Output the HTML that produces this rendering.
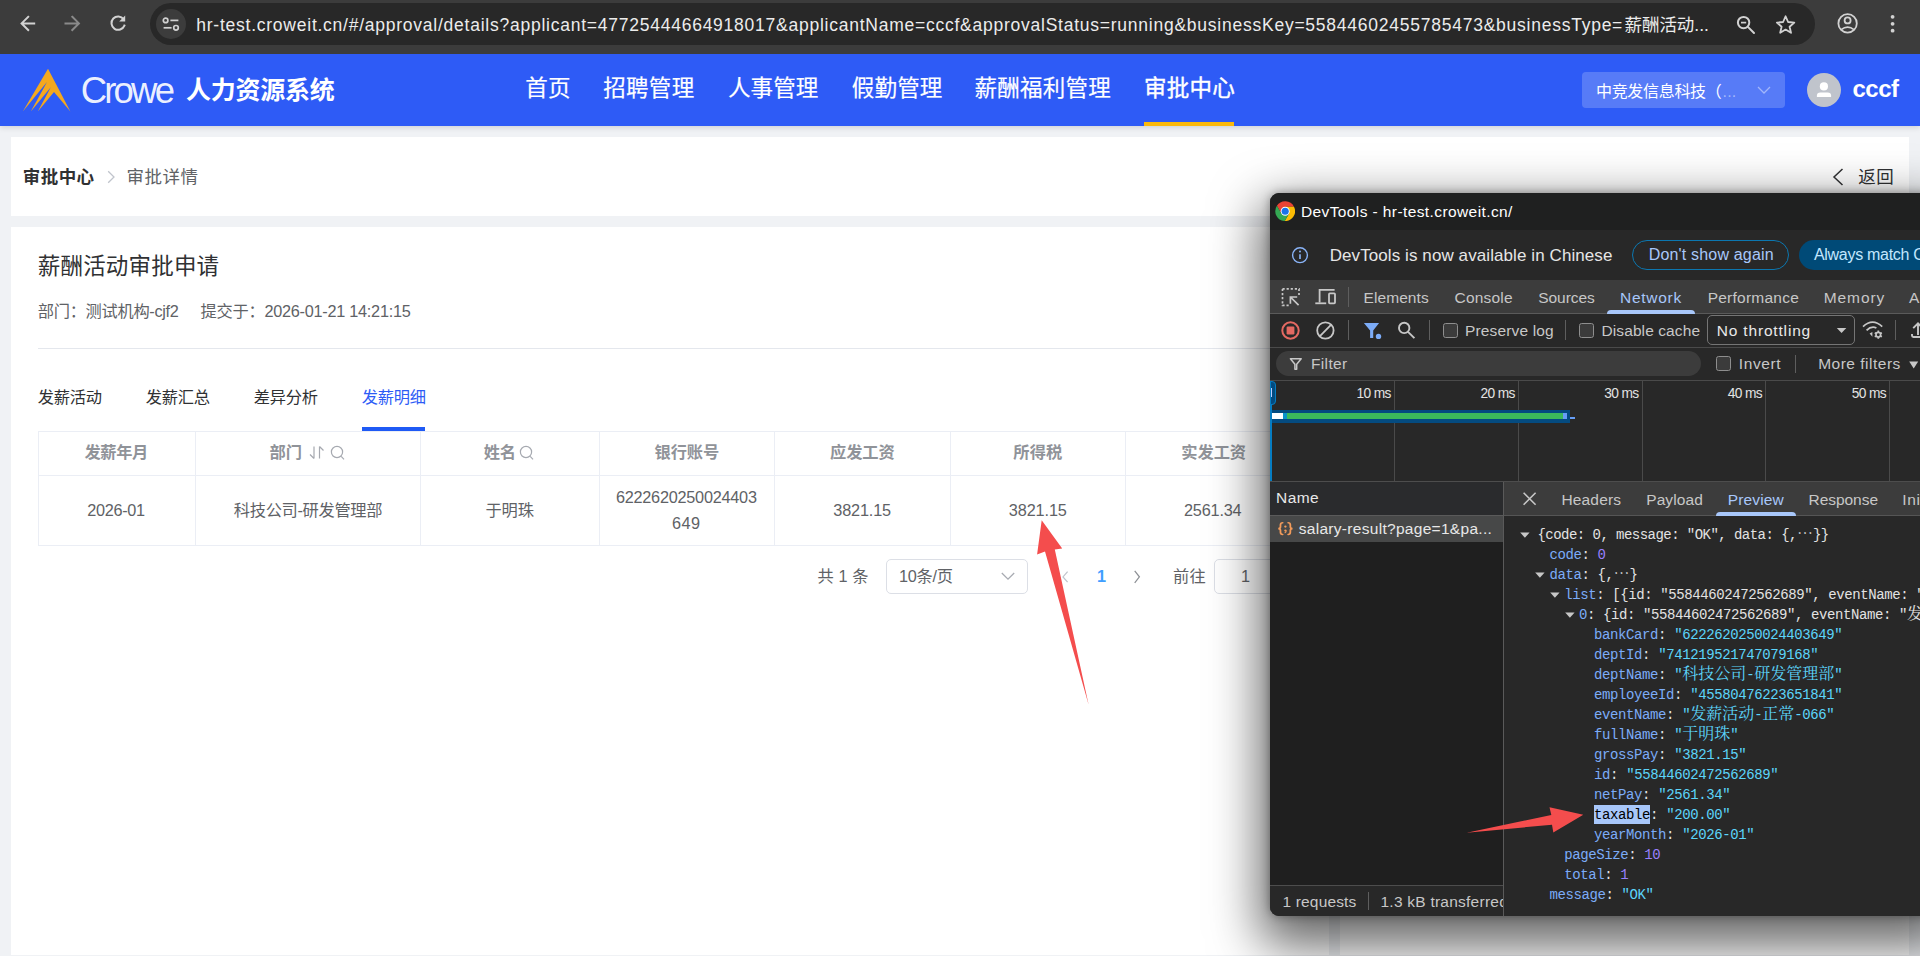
<!DOCTYPE html>
<html lang="zh-CN">
<head>
<meta charset="utf-8">
<title>审批详情</title>
<style>
*{margin:0;padding:0;box-sizing:border-box}
html,body{width:1920px;height:956px;overflow:hidden;background:#f0f2f5}
body{position:relative;font-family:"Liberation Sans","Noto Sans CJK SC",sans-serif;font-size:16px;color:#303133}
.b{position:absolute;display:block}
.t{position:absolute;white-space:pre;display:block}
</style>
</head>
<body>
<!-- ===== web page ===== -->
<div class="b" style="left:11px;top:137px;width:1898px;height:79px;background:#fff;"></div>
<div class="b" style="left:11px;top:227px;width:1318px;height:728px;background:#fff;"></div>
<div class="b" style="left:1340px;top:227px;width:569px;height:728px;background:#fff;"></div>
<span class="t" style="left:22.8px;top:163.6px;font-size:17.5px;line-height:26px;color:#303133;font-weight:700;letter-spacing:0.425px;">审批中心</span>
<svg class="b" style="left:105px;top:169px;" width="12" height="16" viewBox="0 0 12 16"><path d="M3.2 2.2 L9 8 L3.2 13.8" fill="none" stroke="#c0c4cc" stroke-width="1.3"/></svg>
<span class="t" style="left:126.4px;top:163.6px;font-size:17.5px;line-height:26px;color:#606266;letter-spacing:0.525px;">审批详情</span>
<svg class="b" style="left:1830px;top:167px;" width="16" height="20" viewBox="0 0 16 20"><path d="M12.5 2 L4 10 L12.5 18" fill="none" stroke="#303133" stroke-width="1.5"/></svg>
<span class="t" style="left:1858.3px;top:163.6px;font-size:17.5px;line-height:26px;color:#303133;letter-spacing:0.45px;">返回</span>
<span class="t" style="left:37.8px;top:249.6px;font-size:22.5px;line-height:34px;color:#303133;letter-spacing:0.186px;">薪酬活动审批申请</span>
<span class="t" style="left:37.8px;top:299.0px;font-size:16.25px;line-height:24px;color:#606266;letter-spacing:-0.313px;">部门：测试机构-cjf2</span>
<span class="t" style="left:200.5px;top:299.0px;font-size:16.25px;line-height:24px;color:#606266;letter-spacing:-0.257px;">提交于：2026-01-21 14:21:15</span>
<div class="b" style="left:38px;top:347.5px;width:1264px;height:1.25px;background:#e4e7ed;"></div>
<span class="t" style="left:37.8px;top:385.3px;font-size:16.25px;line-height:24px;color:#303133;letter-spacing:-0.3px;">发薪活动</span>
<span class="t" style="left:145.8px;top:385.3px;font-size:16.25px;line-height:24px;color:#303133;letter-spacing:-0.3px;">发薪汇总</span>
<span class="t" style="left:253.8px;top:385.3px;font-size:16.25px;line-height:24px;color:#303133;letter-spacing:-0.3px;">差异分析</span>
<span class="t" style="left:361.8px;top:385.3px;font-size:16.25px;line-height:24px;color:#2d5cf6;letter-spacing:-0.3px;">发薪明细</span>
<div class="b" style="left:362px;top:427.2px;width:63.2px;height:3.8px;background:#1f5af5;"></div>
<div class="b" style="left:38px;top:431px;width:1264px;height:114.5px;border:1.25px solid #ebeef5;"></div>
<div class="b" style="left:38px;top:474.6px;width:1264px;height:1.25px;background:#ebeef5;"></div>
<div class="b" style="left:195px;top:431px;width:1.25px;height:114.5px;background:#ebeef5;"></div>
<div class="b" style="left:420px;top:431px;width:1.25px;height:114.5px;background:#ebeef5;"></div>
<div class="b" style="left:599px;top:431px;width:1.25px;height:114.5px;background:#ebeef5;"></div>
<div class="b" style="left:774px;top:431px;width:1.25px;height:114.5px;background:#ebeef5;"></div>
<div class="b" style="left:950px;top:431px;width:1.25px;height:114.5px;background:#ebeef5;"></div>
<div class="b" style="left:1125px;top:431px;width:1.25px;height:114.5px;background:#ebeef5;"></div>
<span class="t" style="left:84.5px;top:440.3px;font-size:16.25px;line-height:24px;color:#909399;font-weight:700;letter-spacing:-0.375px;">发薪年月</span>
<span class="t" style="left:269.5px;top:440.3px;font-size:16.25px;line-height:24px;color:#909399;font-weight:700;letter-spacing:0.1px;">部门</span>
<svg class="b" style="left:308px;top:444px;" width="18" height="17" viewBox="0 0 18 17"><g fill="none" stroke="#a6a9b0" stroke-width="1.2"><path d="M6 2.5 V14.5 M6 14.5 L2 10.5"/><path d="M11.5 14.5 V2.5 M11.5 2.5 L15.5 6.5"/></g></svg>
<svg class="b" style="left:330px;top:444px;" width="16" height="17" viewBox="0 0 16 17"><g fill="none" stroke="#a6a9b0" stroke-width="1.2"><circle cx="7" cy="8" r="5.6"/><path d="M11.2 12.4 L14 15.3"/></g></svg>
<span class="t" style="left:483.8px;top:440.3px;font-size:16.25px;line-height:24px;color:#909399;font-weight:700;letter-spacing:-0.4px;">姓名</span>
<svg class="b" style="left:519px;top:444px;" width="16" height="17" viewBox="0 0 16 17"><g fill="none" stroke="#a6a9b0" stroke-width="1.2"><circle cx="7" cy="8" r="5.6"/><path d="M11.2 12.4 L14 15.3"/></g></svg>
<span class="t" style="left:654.5px;top:440.3px;font-size:16.25px;line-height:24px;color:#909399;font-weight:700;letter-spacing:-0.075px;">银行账号</span>
<span class="t" style="left:830.0px;top:440.3px;font-size:16.25px;line-height:24px;color:#909399;font-weight:700;letter-spacing:-0.075px;">应发工资</span>
<span class="t" style="left:1013.3px;top:440.3px;font-size:16.25px;line-height:24px;color:#909399;font-weight:700;letter-spacing:0.083px;">所得税</span>
<span class="t" style="left:1181.3px;top:440.3px;font-size:16.25px;line-height:24px;color:#909399;font-weight:700;letter-spacing:-0.075px;">实发工资</span>
<span class="t" style="left:87.2px;top:498.0px;font-size:16.25px;line-height:24px;color:#606266;letter-spacing:-0.292px;">2026-01</span>
<span class="t" style="left:233.8px;top:498.0px;font-size:16.25px;line-height:24px;color:#606266;letter-spacing:-0.327px;">科技公司-研发管理部</span>
<span class="t" style="left:485.5px;top:498.0px;font-size:16.25px;line-height:24px;color:#606266;letter-spacing:-0.15px;">于明珠</span>
<span class="t" style="left:615.9px;top:485.3px;font-size:16.25px;line-height:24px;color:#606266;letter-spacing:-0.238px;">6222620250024403</span>
<span class="t" style="left:672.0px;top:511.0px;font-size:16.25px;line-height:24px;color:#606266;letter-spacing:0.458px;">649</span>
<span class="t" style="left:833.3px;top:498.0px;font-size:16.25px;line-height:24px;color:#606266;letter-spacing:-0.15px;">3821.15</span>
<span class="t" style="left:1008.8px;top:498.0px;font-size:16.25px;line-height:24px;color:#606266;letter-spacing:-0.107px;">3821.15</span>
<span class="t" style="left:1183.9px;top:498.0px;font-size:16.25px;line-height:24px;color:#606266;letter-spacing:-0.164px;">2561.34</span>
<span class="t" style="left:817.5px;top:564.2px;font-size:16.25px;line-height:24px;color:#606266;letter-spacing:0.084px;">共 1 条</span>
<div class="b" style="left:885.6px;top:559.2px;width:142.8px;height:35px;background:#fff;border-radius:5px;border:1.25px solid #dcdfe6;"></div>
<span class="t" style="left:899.0px;top:564.2px;font-size:16.25px;line-height:24px;color:#606266;letter-spacing:-0.259px;">10条/页</span>
<svg class="b" style="left:999px;top:569px;" width="18" height="14" viewBox="0 0 18 14"><path d="M2.8 4 L9 10.2 L15.2 4" fill="none" stroke="#a8abb2" stroke-width="1.3"/></svg>
<svg class="b" style="left:1058px;top:568px;" width="14" height="18" viewBox="0 0 14 18"><path d="M9.6 3.6 L5 8.9 L9.6 14.2" fill="none" stroke="#c0c4cc" stroke-width="1.25"/></svg>
<span class="t" style="left:1096.9px;top:564.2px;font-size:16.25px;line-height:24px;color:#409eff;font-weight:700;letter-spacing:-1.447px;">1</span>
<svg class="b" style="left:1130px;top:568px;" width="14" height="18" viewBox="0 0 14 18"><path d="M4.7 2.8 L9.4 8.8 L4.7 14.8" fill="none" stroke="#8d9095" stroke-width="1.25"/></svg>
<span class="t" style="left:1173.0px;top:564.2px;font-size:16.25px;line-height:24px;color:#606266;letter-spacing:0.2px;">前往</span>
<div class="b" style="left:1214.4px;top:559.2px;width:62px;height:35px;background:#fff;border-radius:5px;border:1.25px solid #dcdfe6;"></div>
<span class="t" style="left:1241.0px;top:564.2px;font-size:16.25px;line-height:24px;color:#606266;letter-spacing:-1.047px;">1</span>
<!-- ===== app header ===== -->
<div class="b" style="left:0px;top:54px;width:1920px;height:72px;background:#2e5bf6;box-shadow:0 1px 6px rgba(0,21,41,.17);"></div>
<svg class="b" style="left:20px;top:64px;" width="56" height="52" viewBox="20 64 56 52"><path d="M48 68.7 L70.4 111.4 L54 92 L37.8 111.4 L50.8 87.2 L30.8 111.4 L47 82 L22.8 111.4 Z" fill="#f4a81e"/></svg>
<span class="t" style="left:80.7px;top:62.7px;font-size:36.5px;line-height:55px;color:rgba(255,255,255,.92);letter-spacing:-2.797px;">Crowe</span>
<span class="t" style="left:186.1px;top:70.6px;font-size:25px;line-height:38px;color:#fff;font-weight:700;letter-spacing:-0.269px;">人力资源系统</span>
<span class="t" style="left:525.2px;top:72.2px;font-size:22.5px;line-height:34px;color:#fff;letter-spacing:0.392px;-webkit-text-stroke:0.2px #fff;">首页</span>
<span class="t" style="left:603.2px;top:72.2px;font-size:22.5px;line-height:34px;color:#fff;letter-spacing:0.321px;-webkit-text-stroke:0.2px #fff;">招聘管理</span>
<span class="t" style="left:727.9px;top:72.2px;font-size:22.5px;line-height:34px;color:#fff;letter-spacing:0.146px;-webkit-text-stroke:0.2px #fff;">人事管理</span>
<span class="t" style="left:851.8px;top:72.2px;font-size:22.5px;line-height:34px;color:#fff;letter-spacing:0.171px;-webkit-text-stroke:0.2px #fff;">假勤管理</span>
<span class="t" style="left:974.5px;top:72.2px;font-size:22.5px;line-height:34px;color:#fff;letter-spacing:0.247px;-webkit-text-stroke:0.2px #fff;">薪酬福利管理</span>
<span class="t" style="left:1144.0px;top:72.2px;font-size:22.5px;line-height:34px;color:#fff;letter-spacing:0.221px;-webkit-text-stroke:0.4px #fff;">审批中心</span>
<div class="b" style="left:1144.2px;top:122px;width:90px;height:4px;background:#fbb90c;"></div>
<div class="b" style="left:1582px;top:72px;width:203px;height:36px;background:rgba(255,255,255,.2);border-radius:4px;"></div>
<span class="t" style="left:1596.0px;top:79.8px;font-size:16px;line-height:24px;color:#fff;letter-spacing:-0.314px;">中竞发信息科技（</span>
<span class="t" style="left:1722.5px;top:79.8px;font-size:16px;line-height:24px;color:rgba(255,255,255,.45);letter-spacing:0.219px;">...</span>
<svg class="b" style="left:1755px;top:83px;" width="18" height="14" viewBox="0 0 18 14"><path d="M3 4 L9 10 L15 4" fill="none" stroke="rgba(255,255,255,.45)" stroke-width="1.3"/></svg>
<div class="b" style="left:1807px;top:73px;width:34px;height:34px;background:#c0c4cc;border-radius:50%;"></div>
<svg class="b" style="left:1807px;top:73px;" width="34" height="34" viewBox="0 0 34 34"><circle cx="16.9" cy="13.4" r="4.1" fill="#fff"/><path d="M9.9 24.1 V22.4 Q9.9 19.4 13.4 19.4 H20.6 Q24.1 19.4 24.1 22.4 V24.1 Z" fill="#fff"/></svg>
<span class="t" style="left:1852.5px;top:70.6px;font-size:24px;line-height:36px;color:#fff;font-weight:700;letter-spacing:-0.512px;">cccf</span>
<!-- ===== browser toolbar ===== -->
<div class="b" style="left:0px;top:0px;width:1920px;height:54px;background:#3c3c3c;"></div>
<div class="b" style="left:150px;top:3px;width:1665px;height:42px;background:#282828;border-radius:21px;"></div>
<div class="b" style="left:156px;top:9.3px;width:30px;height:30px;background:#3c3c3c;border-radius:50%;"></div>
<svg class="b" style="left:10px;top:8px;" width="130" height="32" viewBox="0 0 130 32"><g fill="none" stroke-width="2" stroke-linecap="square">
<path d="M24.2 15.4 H12 M18.2 8.8 L11.6 15.4 L18.2 22" stroke="#d2d2d2"/>
<path d="M55.5 15.4 H68.5 M62.3 8.8 L68.9 15.4 L62.3 22" stroke="#8a8a8a"/>
<path d="M113.6 11.2 A6.7 6.7 0 1 0 114.4 17.6" stroke="#d2d2d2"/></g>
<path d="M115.2 7.6 V13.6 H109.2 Z" fill="#d2d2d2"/></svg>
<svg class="b" style="left:160px;top:14px;" width="22" height="22" viewBox="0 0 22 22"><g fill="none" stroke="#d2d2d2" stroke-width="1.7"><circle cx="5.6" cy="6.4" r="2.3"/><path d="M10.4 6.4 H18.4"/><path d="M3.6 13.8 H11.6"/><circle cx="16" cy="13.8" r="2.3"/></g></svg>
<span class="t" style="left:196.3px;top:11.8px;font-size:17.5px;line-height:26px;color:#ececec;letter-spacing:0.754px;">hr-test.croweit.cn/#/approval/details?applicant=47725444664918017&amp;applicantName=cccf&amp;approvalStatus=running&amp;businessKey=55844602455785473&amp;businessType=</span>
<span class="t" style="left:1624.5px;top:12.0px;font-size:17.5px;line-height:26px;color:#ececec;letter-spacing:-0.042px;">薪酬活动...</span>
<svg class="b" style="left:1734px;top:13px;" width="24" height="24" viewBox="0 0 24 24"><g fill="none" stroke="#d2d2d2" stroke-width="2"><circle cx="9.6" cy="9.6" r="5.7"/><path d="M13.9 13.9 L20 20" stroke-linecap="round"/><path d="M7 9.6 H12.2" stroke-width="1.7"/></g></svg>
<svg class="b" style="left:1774px;top:13px;" width="24" height="24" viewBox="0 0 24 24"><path d="M11.6 3.3 L14.1 9 L20.3 9.6 L15.6 13.7 L17 19.8 L11.6 16.6 L6.2 19.8 L7.6 13.7 L2.9 9.6 L9.1 9 Z" fill="none" stroke="#d2d2d2" stroke-width="1.8" stroke-linejoin="round"/></svg>
<svg class="b" style="left:1835px;top:11px;" width="26" height="26" viewBox="0 0 26 26"><g fill="none" stroke="#d2d2d2" stroke-width="1.8"><circle cx="12.6" cy="12.4" r="9.2"/><circle cx="12.6" cy="9.4" r="3"/><path d="M6.2 18.6 Q12.6 13.6 19 18.6"/></g></svg>
<svg class="b" style="left:1888px;top:12px;" width="10" height="24" viewBox="0 0 10 24"><g fill="#d2d2d2"><circle cx="4.6" cy="4.8" r="1.9"/><circle cx="4.6" cy="11.8" r="1.9"/><circle cx="4.6" cy="18.7" r="1.9"/></g></svg>
<!-- ===== annotations ===== -->
<svg class="b" style="left:1030px;top:515px;" width="70" height="195" viewBox="1030 515 70 195"><path d="M1041.7 520.3 L1062.2 548.4 L1054.8 549.6 L1088.7 705 L1045 551.5 L1037.1 554.6 Z" fill="#f44d4d"/></svg>
<!-- ===== DevTools window ===== -->
<div class="b" style="left:1270px;top:193px;width:670px;height:722.75px;background:#282828;border-radius:9px 0 0 9px;box-shadow:0 20px 50px 10px rgba(0,0,0,.6),0 0 10px rgba(0,0,0,.35);"></div>
<div class="b" style="left:1270px;top:193px;width:670px;height:37px;background:#1f2020;border-radius:9px 0 0 0;"></div>
<svg class="b" style="left:1275px;top:200.7px;" width="20.4" height="20.4" viewBox="0 0 24 24"><path d="M12.00 6.70 L22.32 6.70 A11.6 11.6 0 0 0 2.25 5.71 L7.41 14.65 Z" fill="#ea4335"/>
<path d="M16.59 14.65 L11.43 23.59 A11.6 11.6 0 0 0 22.32 6.70 L12.00 6.70 Z" fill="#fbbc04"/>
<path d="M7.41 14.65 L2.25 5.71 A11.6 11.6 0 0 0 11.43 23.59 L16.59 14.65 Z" fill="#34a853"/>
<circle cx="12" cy="12" r="5.3" fill="#fff"/><circle cx="12" cy="12" r="4.2" fill="#1a73e8"/></svg>
<span class="t" style="left:1300.9px;top:199.8px;font-size:15.5px;line-height:23px;color:#fff;letter-spacing:0.402px;">DevTools - hr-test.croweit.cn/</span>
<svg class="b" style="left:1291px;top:246px;" width="18" height="18" viewBox="0 0 18 18"><g fill="none" stroke="#8ab4f8" stroke-width="1.4"><circle cx="9" cy="9.2" r="7.4"/></g><path d="M9 8.2 V13" stroke="#8ab4f8" stroke-width="1.6"/><circle cx="9" cy="5.6" r="1" fill="#8ab4f8"/></svg>
<span class="t" style="left:1329.7px;top:243.2px;font-size:17px;line-height:26px;color:#e6e6e6;letter-spacing:0.086px;">DevTools is now available in Chinese</span>
<div class="b" style="left:1632px;top:240px;width:157px;height:30px;border-radius:15px;border:1.25px solid #0c77b0;"></div>
<span class="t" style="left:1648.7px;top:242.6px;font-size:16px;line-height:24px;color:#a8c7fa;letter-spacing:0.178px;">Don't show again</span>
<div class="b" style="left:1798.8px;top:240px;width:200px;height:30px;background:#004a77;border-radius:15px;"></div>
<span class="t" style="left:1813.9px;top:242.6px;font-size:16px;line-height:24px;color:#c2e7ff;letter-spacing:-0.287px;">Always match Chrome</span>
<div class="b" style="left:1270px;top:280px;width:670px;height:34px;background:#3c3c3c;border-bottom:1.25px solid #5a5a5a;"></div>
<svg class="b" style="left:1280px;top:286px;" width="22" height="22" viewBox="0 0 22 22"><g fill="none" stroke="#c7c7c7" stroke-width="1.7"><path d="M2.5 2.9 H19 V11" stroke-dasharray="2.2 1.9"/><path d="M2.5 2.9 V19.4 H10.5" stroke-dasharray="2.2 1.9"/><path d="M18.6 19.2 L10.4 11 M10.4 17.8 V11 H17.2"/></g></svg>
<svg class="b" style="left:1314px;top:286px;" width="24" height="22" viewBox="0 0 24 22"><g fill="none" stroke="#c7c7c7" stroke-width="1.8"><path d="M5.6 16.4 V3.9 H20.6"/><path d="M1.3 17.3 H12.2"/><rect x="15" y="7.4" width="6" height="9.9" rx="0.8"/></g></svg>
<div class="b" style="left:1348px;top:287px;width:1.25px;height:20px;background:#5e5e5e;"></div>
<span class="t" style="left:1363.5px;top:286.1px;font-size:15.5px;line-height:23px;color:#c7c7c7;letter-spacing:0.084px;">Elements</span>
<span class="t" style="left:1454.5px;top:286.1px;font-size:15.5px;line-height:23px;color:#c7c7c7;letter-spacing:0.204px;">Console</span>
<span class="t" style="left:1538.2px;top:286.1px;font-size:15.5px;line-height:23px;color:#c7c7c7;letter-spacing:-0.039px;">Sources</span>
<span class="t" style="left:1620.0px;top:286.1px;font-size:15.5px;line-height:23px;color:#a8c7fa;letter-spacing:0.734px;">Network</span>
<span class="t" style="left:1707.7px;top:286.1px;font-size:15.5px;line-height:23px;color:#c7c7c7;letter-spacing:0.233px;">Performance</span>
<span class="t" style="left:1823.7px;top:286.1px;font-size:15.5px;line-height:23px;color:#c7c7c7;letter-spacing:0.936px;">Memory</span>
<span class="t" style="left:1909.1px;top:286.1px;font-size:15.5px;line-height:23px;color:#c7c7c7;letter-spacing:0.325px;">Application</span>
<div class="b" style="left:1607px;top:309.8px;width:88.3px;height:4px;background:#a8c7fa;border-radius:4px 4px 0 0;"></div>
<div class="b" style="left:1270px;top:346.8px;width:670px;height:1.25px;background:#4a4a4a;"></div>
<svg class="b" style="left:1280px;top:320px;" width="22" height="22" viewBox="0 0 22 22"><circle cx="10.5" cy="10.5" r="8.2" fill="none" stroke="#e46962" stroke-width="2"/><rect x="6.6" y="6.6" width="7.8" height="7.8" rx="1.2" fill="#e46962"/></svg>
<svg class="b" style="left:1315px;top:320px;" width="22" height="22" viewBox="0 0 22 22"><g fill="none" stroke="#c7c7c7" stroke-width="1.8"><circle cx="10.4" cy="10.5" r="8.2"/><path d="M4.7 16.3 L16.2 4.7"/></g></svg>
<div class="b" style="left:1348px;top:320px;width:1.25px;height:20px;background:#5e5e5e;"></div>
<svg class="b" style="left:1362px;top:321px;" width="22" height="20" viewBox="0 0 22 20"><path d="M1.9 2.1 H17.1 L11.2 9.4 V17.1 H8.1 V9.4 Z" fill="#7cacf8"/><circle cx="16.5" cy="15.4" r="2.7" fill="#7cacf8"/></svg>
<svg class="b" style="left:1396px;top:321px;" width="22" height="20" viewBox="0 0 22 20"><g fill="none" stroke="#c7c7c7" stroke-width="1.9"><circle cx="8.2" cy="6.9" r="5.2"/><path d="M12 10.8 L18.4 17.2"/></g></svg>
<div class="b" style="left:1429px;top:320px;width:1.25px;height:20px;background:#5e5e5e;"></div>
<div class="b" style="left:1443px;top:323px;width:14.8px;height:14.8px;background:#3b3b3b;border-radius:2.6px;border:1.25px solid #8e8e8e;"></div>
<span class="t" style="left:1464.9px;top:318.9px;font-size:15.5px;line-height:23px;color:#c7c7c7;letter-spacing:0.165px;">Preserve log</span>
<div class="b" style="left:1565px;top:320px;width:1.25px;height:20px;background:#5e5e5e;"></div>
<div class="b" style="left:1579.3px;top:323px;width:14.8px;height:14.8px;background:#3b3b3b;border-radius:2.6px;border:1.25px solid #8e8e8e;"></div>
<span class="t" style="left:1601.5px;top:318.9px;font-size:15.5px;line-height:23px;color:#c7c7c7;letter-spacing:0.095px;">Disable cache</span>
<div class="b" style="left:1706.5px;top:315.4px;width:148.5px;height:29.4px;border-radius:5px;border:1.25px solid #757575;"></div>
<span class="t" style="left:1716.7px;top:318.9px;font-size:15.5px;line-height:23px;color:#e8e8e8;letter-spacing:0.832px;">No throttling</span>
<svg class="b" style="left:1835px;top:326px;" width="13" height="9" viewBox="0 0 13 9"><path d="M1.8 2 H11.3 L6.55 7 Z" fill="#c7c7c7"/></svg>
<svg class="b" style="left:1861px;top:319px;" width="24" height="22" viewBox="0 0 24 22"><g fill="none" stroke="#c7c7c7" stroke-width="1.8"><path d="M2 7.6 Q11.6 -1.4 21.2 7.6"/><path d="M5.6 11.4 Q10.4 6.6 15.4 9"/></g><path d="M8.6 14.6 L11.4 17.8 L11.4 13 Z" fill="#c7c7c7"/><circle cx="17.3" cy="15.7" r="2.3" fill="none" stroke="#c7c7c7" stroke-width="1.7"/><path d="M17.30 13.10 L17.30 11.60 M19.55 14.40 L20.85 13.65 M19.55 17.00 L20.85 17.75 M17.30 18.30 L17.30 19.80 M15.05 17.00 L13.75 17.75 M15.05 14.40 L13.75 13.65" stroke="#c7c7c7" stroke-width="1.7" fill="none"/></svg>
<div class="b" style="left:1895px;top:320px;width:1.25px;height:20px;background:#5e5e5e;"></div>
<svg class="b" style="left:1910.4px;top:320px;" width="14" height="22" viewBox="0 0 14 22"><g fill="none" stroke="#c7c7c7" stroke-width="1.9"><path d="M8 15 V3.4 M3.2 8.2 L8 3.4 L12.8 8.2"/><path d="M2 14 V15.6 Q2 17 3.4 17 H14"/></g></svg>
<div class="b" style="left:1270px;top:379.8px;width:670px;height:1.25px;background:#4a4a4a;"></div>
<div class="b" style="left:1276px;top:350.8px;width:425px;height:25px;background:#3c3c3c;border-radius:12.5px;"></div>
<svg class="b" style="left:1288px;top:355px;" width="16" height="17" viewBox="0 0 16 17"><path d="M2.4 3.8 H13.2 L8.7 9.2 V14.3 H6.9 V9.2 Z" fill="none" stroke="#c7c7c7" stroke-width="1.5" stroke-linejoin="round"/></svg>
<span class="t" style="left:1311.0px;top:352.3px;font-size:15.5px;line-height:23px;color:#c7c7c7;letter-spacing:0.341px;">Filter</span>
<div class="b" style="left:1716px;top:356px;width:14.8px;height:14.8px;background:#3b3b3b;border-radius:2.6px;border:1.25px solid #8e8e8e;"></div>
<span class="t" style="left:1738.8px;top:352.3px;font-size:15.5px;line-height:23px;color:#c7c7c7;letter-spacing:0.606px;">Invert</span>
<div class="b" style="left:1794.6px;top:355px;width:1.25px;height:18px;background:#5e5e5e;"></div>
<span class="t" style="left:1818.2px;top:352.3px;font-size:15.5px;line-height:23px;color:#c7c7c7;letter-spacing:0.495px;">More filters</span>
<svg class="b" style="left:1908px;top:360px;" width="12" height="10" viewBox="0 0 12 10"><path d="M1.2 1.4 H10.2 L5.7 8.6 Z" fill="#c7c7c7"/></svg>
<div class="b" style="left:1394px;top:381px;width:1.25px;height:100px;background:#4a4a4a;"></div>
<span class="t" style="left:1356.5px;top:383.4px;font-size:13.75px;line-height:21px;color:#e3e3e3;letter-spacing:-0.611px;">10 ms</span>
<div class="b" style="left:1518px;top:381px;width:1.25px;height:100px;background:#4a4a4a;"></div>
<span class="t" style="left:1480.5px;top:383.4px;font-size:13.75px;line-height:21px;color:#e3e3e3;letter-spacing:-0.611px;">20 ms</span>
<div class="b" style="left:1641.7px;top:381px;width:1.25px;height:100px;background:#4a4a4a;"></div>
<span class="t" style="left:1604.2px;top:383.4px;font-size:13.75px;line-height:21px;color:#e3e3e3;letter-spacing:-0.611px;">30 ms</span>
<div class="b" style="left:1765.2px;top:381px;width:1.25px;height:100px;background:#4a4a4a;"></div>
<span class="t" style="left:1727.7px;top:383.4px;font-size:13.75px;line-height:21px;color:#e3e3e3;letter-spacing:-0.611px;">40 ms</span>
<div class="b" style="left:1889.2px;top:381px;width:1.25px;height:100px;background:#4a4a4a;"></div>
<span class="t" style="left:1851.7px;top:383.4px;font-size:13.75px;line-height:21px;color:#e3e3e3;letter-spacing:-0.611px;">50 ms</span>
<div class="b" style="left:1270px;top:381px;width:2.2px;height:100px;background:#067dc2;"></div>
<div class="b" style="left:1270px;top:381.2px;width:5.8px;height:23.8px;background:#034b80;border-radius:0 4px 4px 0;border:1.1px solid #067dc2;"></div>
<div class="b" style="left:1271px;top:388.1px;width:1.2px;height:8.8px;background:#b9cdff;"></div>
<div class="b" style="left:1272px;top:410.3px;width:297.8px;height:12.6px;background:#044b80;"></div>
<div class="b" style="left:1272px;top:412.8px;width:11.4px;height:6.5px;background:#fff;"></div>
<div class="b" style="left:1283.4px;top:412.8px;width:3.4px;height:6.5px;background:#0a94c8;"></div>
<div class="b" style="left:1286.8px;top:412.8px;width:276px;height:6.5px;background:#3cba5b;"></div>
<div class="b" style="left:1562.7px;top:412.8px;width:4.6px;height:6.5px;background:#669df6;"></div>
<div class="b" style="left:1570px;top:416.7px;width:5px;height:2.4px;background:#669df6;"></div>
<div class="b" style="left:1270px;top:481px;width:670px;height:1.25px;background:#4d4d4d;"></div>
<div class="b" style="left:1270px;top:482.2px;width:233.2px;height:33px;background:#2a2b2d;"></div>
<span class="t" style="left:1276.1px;top:486.1px;font-size:15.5px;line-height:23px;color:#e8e8e8;letter-spacing:0.435px;">Name</span>
<div class="b" style="left:1270px;top:515px;width:233.2px;height:1.2px;background:#5a5a5a;"></div>
<div class="b" style="left:1270px;top:516.2px;width:233.2px;height:25.6px;background:#474848;"></div>
<svg class="b" style="left:1276.6px;top:522.2px;" width="17" height="14" viewBox="0 0 17 14"><g transform="scale(1.05 0.92)"><g fill="none" stroke="#f29b5b" stroke-width="1.7" stroke-linecap="round"><path d="M5.4 0.9 Q3.3 0.9 3.3 3.2 V5.2 Q3.3 7.2 1.2 7.2 Q3.3 7.2 3.3 9.2 V11.2 Q3.3 13.5 5.4 13.5"/><path d="M10.6 0.9 Q12.7 0.9 12.7 3.2 V5.2 Q12.7 7.2 14.8 7.2 Q12.7 7.2 12.7 9.2 V11.2 Q12.7 13.5 10.6 13.5"/></g><circle cx="8" cy="5" r="1.15" fill="#f29b5b"/><circle cx="8" cy="9.2" r="1.15" fill="#f29b5b"/><path d="M8.7 9.4 Q8.9 11.2 7.3 12" fill="none" stroke="#f29b5b" stroke-width="1.1"/></g></svg>
<span class="t" style="left:1298.7px;top:516.7px;font-size:15.5px;line-height:23px;color:#e8e8e8;letter-spacing:0.3px;">salary-result?page=1&amp;pa...</span>
<div class="b" style="left:1270px;top:541.8px;width:233.2px;height:343.4px;background:#1f1f1f;"></div>
<div class="b" style="left:1270px;top:885px;width:233.2px;height:1.25px;background:#4d4d4d;"></div>
<div class="b" style="left:1270px;top:886.2px;width:233.2px;height:29.6px;background:#282828;border-radius:0 0 0 9px;"></div>
<span class="t" style="left:1282.5px;top:889.9px;font-size:15.5px;line-height:23px;color:#c7c7c7;letter-spacing:0.161px;">1 requests</span>
<div class="b" style="left:1368px;top:892px;width:1.25px;height:18px;background:#5e5e5e;"></div>
<span class="t" style="left:1380.5px;top:889.9px;font-size:15.5px;line-height:23px;color:#c7c7c7;letter-spacing:0.239px;width:122px;overflow:hidden;">1.3 kB transferred</span>
<div class="b" style="left:1504.4px;top:482.2px;width:430px;height:33.4px;background:#3c3c3c;border-bottom:1.25px solid #555;"></div>
<div class="b" style="left:1503.2px;top:482px;width:1.25px;height:434px;background:#5a5a5a;"></div>
<svg class="b" style="left:1521px;top:490px;" width="18" height="18" viewBox="0 0 18 18"><path d="M2.6 2.8 L14.6 14.8 M14.6 2.8 L2.6 14.8" stroke="#c7c7c7" stroke-width="1.6" fill="none"/></svg>
<span class="t" style="left:1561.5px;top:488.1px;font-size:15.5px;line-height:23px;color:#c7c7c7;letter-spacing:0.144px;">Headers</span>
<span class="t" style="left:1646.2px;top:488.1px;font-size:15.5px;line-height:23px;color:#c7c7c7;letter-spacing:0.112px;">Payload</span>
<span class="t" style="left:1727.7px;top:488.1px;font-size:15.5px;line-height:23px;color:#a8c7fa;letter-spacing:0.166px;">Preview</span>
<span class="t" style="left:1808.5px;top:488.1px;font-size:15.5px;line-height:23px;color:#c7c7c7;letter-spacing:-0.037px;">Response</span>
<span class="t" style="left:1902.3px;top:488.1px;font-size:15.5px;line-height:23px;color:#c7c7c7;letter-spacing:0.595px;">Initiator</span>
<div class="b" style="left:1715.5px;top:511.6px;width:80.8px;height:4px;background:#a8c7fa;border-radius:4px 4px 0 0;"></div>
<div class="b" style="left:1594px;top:805px;width:56.2px;height:19px;background:#a8c7fa;"></div>
<svg class="b" style="left:1520px;top:532.1999999999999px;" width="10" height="6.4" viewBox="0 0 10 6.4"><path d="M0.2 0.6 H9.6 L4.9 5.8 Z" fill="#c7c7c7"/></svg>
<span class="t" style="left:1537.5px;top:525.4px;font-size:14px;line-height:20px;color:#e3e3e3;font-family:'Liberation Mono','Noto Serif CJK SC',monospace;letter-spacing:-0.541px;">{code: 0, message: &quot;OK&quot;, data: {,<span style="font-size:16px;line-height:0;letter-spacing:0;font-family:'Noto Serif CJK SC',serif">…</span>}}</span>
<span class="t" style="left:1549.4px;top:545.4px;font-size:14px;line-height:20px;color:#e3e3e3;font-family:'Liberation Mono','Noto Serif CJK SC',monospace;letter-spacing:-0.4px;"><span style="color:#7cacf8">code</span>: <span style="color:#9980ff">0</span></span>
<svg class="b" style="left:1535px;top:572.1999999999999px;" width="10" height="6.4" viewBox="0 0 10 6.4"><path d="M0.2 0.6 H9.6 L4.9 5.8 Z" fill="#c7c7c7"/></svg>
<span class="t" style="left:1549.4px;top:565.4px;font-size:14px;line-height:20px;color:#e3e3e3;font-family:'Liberation Mono','Noto Serif CJK SC',monospace;letter-spacing:-0.4px;"><span style="color:#7cacf8">data</span>: {,<span style="font-size:16px;line-height:0;letter-spacing:0;font-family:'Noto Serif CJK SC',serif">…</span>}</span>
<svg class="b" style="left:1550.3px;top:592.1999999999999px;" width="10" height="6.4" viewBox="0 0 10 6.4"><path d="M0.2 0.6 H9.6 L4.9 5.8 Z" fill="#c7c7c7"/></svg>
<span class="t" style="left:1564.2px;top:585.4px;font-size:14px;line-height:20px;color:#e3e3e3;font-family:'Liberation Mono','Noto Serif CJK SC',monospace;letter-spacing:-0.4px;"><span style="color:#7cacf8">list</span>: [{id: &quot;55844602472562689&quot;, eventName: &quot;<span style="font-size:16px;line-height:0;letter-spacing:0;font-family:'Noto Serif CJK SC',serif">发薪活动</span>-<span style="font-size:16px;line-height:0;letter-spacing:0;font-family:'Noto Serif CJK SC',serif">正常</span>-066&quot;, fullName: &quot;<span style="font-size:16px;line-height:0;letter-spacing:0;font-family:'Noto Serif CJK SC',serif">于明珠</span>&quot;,<span style="font-size:16px;line-height:0;letter-spacing:0;font-family:'Noto Serif CJK SC',serif">…</span>}]</span>
<svg class="b" style="left:1565.3px;top:612.1999999999999px;" width="10" height="6.4" viewBox="0 0 10 6.4"><path d="M0.2 0.6 H9.6 L4.9 5.8 Z" fill="#c7c7c7"/></svg>
<span class="t" style="left:1579.0px;top:605.4px;font-size:14px;line-height:20px;color:#e3e3e3;font-family:'Liberation Mono','Noto Serif CJK SC',monospace;letter-spacing:-0.4px;"><span style="color:#7cacf8">0</span>: {id: &quot;55844602472562689&quot;, eventName: &quot;<span style="font-size:16px;line-height:0;letter-spacing:0;font-family:'Noto Serif CJK SC',serif">发薪活动</span>-<span style="font-size:16px;line-height:0;letter-spacing:0;font-family:'Noto Serif CJK SC',serif">正常</span>-066&quot;, fullName: &quot;<span style="font-size:16px;line-height:0;letter-spacing:0;font-family:'Noto Serif CJK SC',serif">于明珠</span>&quot;,<span style="font-size:16px;line-height:0;letter-spacing:0;font-family:'Noto Serif CJK SC',serif">…</span>}</span>
<span class="t" style="left:1594.1px;top:625.4px;font-size:14px;line-height:20px;color:#e3e3e3;font-family:'Liberation Mono','Noto Serif CJK SC',monospace;letter-spacing:-0.4px;"><span style="color:#7cacf8">bankCard</span>: <span style="color:#5cd5fb">&quot;6222620250024403649&quot;</span></span>
<span class="t" style="left:1594.1px;top:645.4px;font-size:14px;line-height:20px;color:#e3e3e3;font-family:'Liberation Mono','Noto Serif CJK SC',monospace;letter-spacing:-0.4px;"><span style="color:#7cacf8">deptId</span>: <span style="color:#5cd5fb">&quot;741219521747079168&quot;</span></span>
<span class="t" style="left:1594.1px;top:665.4px;font-size:14px;line-height:20px;color:#e3e3e3;font-family:'Liberation Mono','Noto Serif CJK SC',monospace;letter-spacing:-0.4px;"><span style="color:#7cacf8">deptName</span>: <span style="color:#5cd5fb">&quot;<span style="font-size:16px;line-height:0;letter-spacing:0;font-family:'Noto Serif CJK SC',serif">科技公司</span>-<span style="font-size:16px;line-height:0;letter-spacing:0;font-family:'Noto Serif CJK SC',serif">研发管理部</span>&quot;</span></span>
<span class="t" style="left:1594.1px;top:685.4px;font-size:14px;line-height:20px;color:#e3e3e3;font-family:'Liberation Mono','Noto Serif CJK SC',monospace;letter-spacing:-0.4px;"><span style="color:#7cacf8">employeeId</span>: <span style="color:#5cd5fb">&quot;45580476223651841&quot;</span></span>
<span class="t" style="left:1594.1px;top:705.4px;font-size:14px;line-height:20px;color:#e3e3e3;font-family:'Liberation Mono','Noto Serif CJK SC',monospace;letter-spacing:-0.4px;"><span style="color:#7cacf8">eventName</span>: <span style="color:#5cd5fb">&quot;<span style="font-size:16px;line-height:0;letter-spacing:0;font-family:'Noto Serif CJK SC',serif">发薪活动</span>-<span style="font-size:16px;line-height:0;letter-spacing:0;font-family:'Noto Serif CJK SC',serif">正常</span>-066&quot;</span></span>
<span class="t" style="left:1594.1px;top:725.4px;font-size:14px;line-height:20px;color:#e3e3e3;font-family:'Liberation Mono','Noto Serif CJK SC',monospace;letter-spacing:-0.4px;"><span style="color:#7cacf8">fullName</span>: <span style="color:#5cd5fb">&quot;<span style="font-size:16px;line-height:0;letter-spacing:0;font-family:'Noto Serif CJK SC',serif">于明珠</span>&quot;</span></span>
<span class="t" style="left:1594.1px;top:745.4px;font-size:14px;line-height:20px;color:#e3e3e3;font-family:'Liberation Mono','Noto Serif CJK SC',monospace;letter-spacing:-0.4px;"><span style="color:#7cacf8">grossPay</span>: <span style="color:#5cd5fb">&quot;3821.15&quot;</span></span>
<span class="t" style="left:1594.1px;top:765.4px;font-size:14px;line-height:20px;color:#e3e3e3;font-family:'Liberation Mono','Noto Serif CJK SC',monospace;letter-spacing:-0.4px;"><span style="color:#7cacf8">id</span>: <span style="color:#5cd5fb">&quot;55844602472562689&quot;</span></span>
<span class="t" style="left:1594.1px;top:785.4px;font-size:14px;line-height:20px;color:#e3e3e3;font-family:'Liberation Mono','Noto Serif CJK SC',monospace;letter-spacing:-0.4px;"><span style="color:#7cacf8">netPay</span>: <span style="color:#5cd5fb">&quot;2561.34&quot;</span></span>
<span class="t" style="left:1594.1px;top:805.4px;font-size:14px;line-height:20px;color:#e3e3e3;font-family:'Liberation Mono','Noto Serif CJK SC',monospace;letter-spacing:-0.4px;"><span style="color:#000">taxable</span>: <span style="color:#5cd5fb">&quot;200.00&quot;</span></span>
<span class="t" style="left:1594.1px;top:825.4px;font-size:14px;line-height:20px;color:#e3e3e3;font-family:'Liberation Mono','Noto Serif CJK SC',monospace;letter-spacing:-0.4px;"><span style="color:#7cacf8">yearMonth</span>: <span style="color:#5cd5fb">&quot;2026-01&quot;</span></span>
<span class="t" style="left:1564.2px;top:845.4px;font-size:14px;line-height:20px;color:#e3e3e3;font-family:'Liberation Mono','Noto Serif CJK SC',monospace;letter-spacing:-0.4px;"><span style="color:#7cacf8">pageSize</span>: <span style="color:#9980ff">10</span></span>
<span class="t" style="left:1564.2px;top:865.4px;font-size:14px;line-height:20px;color:#e3e3e3;font-family:'Liberation Mono','Noto Serif CJK SC',monospace;letter-spacing:-0.4px;"><span style="color:#7cacf8">total</span>: <span style="color:#9980ff">1</span></span>
<span class="t" style="left:1549.4px;top:885.4px;font-size:14px;line-height:20px;color:#e3e3e3;font-family:'Liberation Mono','Noto Serif CJK SC',monospace;letter-spacing:-0.4px;"><span style="color:#7cacf8">message</span>: <span style="color:#5cd5fb">&quot;OK&quot;</span></span>
<svg class="b" style="left:1460px;top:800px;" width="130" height="40" viewBox="1460 800 130 40"><path d="M1583.3 814.7 L1549.5 807.2 L1551.3 815 L1466.7 832.7 L1552 824.7 L1553.3 832.5 Z" fill="#f44d4d"/></svg>
</body>
</html>
